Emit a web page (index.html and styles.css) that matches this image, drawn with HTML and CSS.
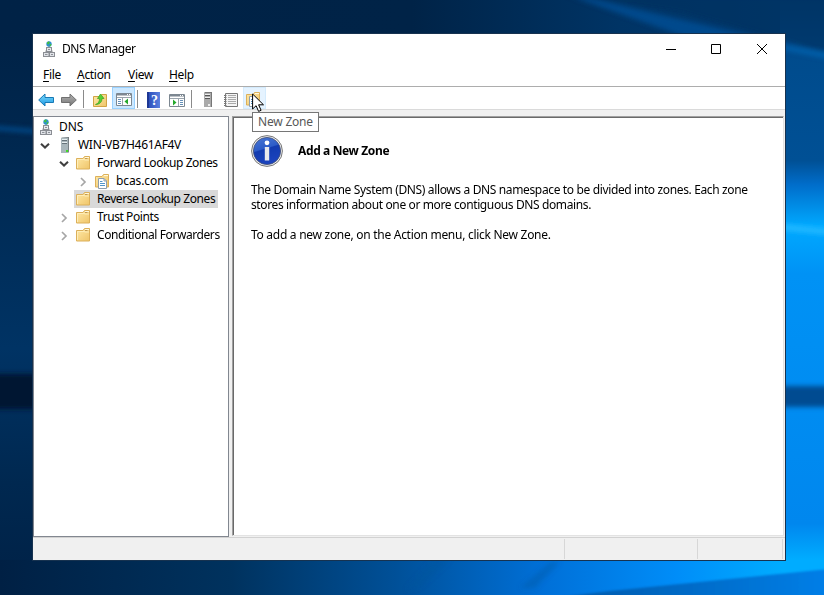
FILE: index.html
```html
<!DOCTYPE html>
<html lang="en">
<head>
<meta charset="utf-8">
<title>DNS Manager</title>
<link rel="stylesheet" href="styles.css">
</head>
<body>
<svg class="defs" width="0" height="0" aria-hidden="true">
  <defs>
    <linearGradient id="gold" x1="0" y1="0" x2="1" y2="1"><stop offset="0" stop-color="#ffe9a8"/><stop offset="1" stop-color="#efc56a"/></linearGradient>
    <linearGradient id="steel" x1="0" x2="1"><stop offset="0" stop-color="#c9ced0"/><stop offset="1" stop-color="#737b80"/></linearGradient>
    <linearGradient id="sky" x1="0" y1="0" x2="0" y2="1"><stop offset="0" stop-color="#7fdcfc"/><stop offset="1" stop-color="#1a96e2"/></linearGradient>
    <linearGradient id="grey" x1="0" y1="0" x2="0" y2="1"><stop offset="0" stop-color="#b4b4b4"/><stop offset="1" stop-color="#747474"/></linearGradient>
    <linearGradient id="book" x1="0" x2="1"><stop offset="0" stop-color="#2447b4"/><stop offset="1" stop-color="#5b80e0"/></linearGradient>
    <symbol id="dns" viewBox="0 0 16 16">
      <path d="M8 5v4M5 12V9.500h6V12" fill="none" stroke="#8a8d92"/>
      <circle cx="8" cy="3" r="2.700" fill="#2f8fd0"/><path d="M6 1.400 8 .3l.8 1.500L7.600 3.600 6.200 3zM9 3.300l1.500-.4-.6 2-1.400.6z" fill="#43c23f"/>
      <rect x="5.500" y="6.500" width="5" height="4" fill="#e6e8ec" stroke="#8b8e94"/>
      <rect x="2.500" y="11.500" width="5.500" height="4" fill="#e1e3e8" stroke="#8b8e94"/><rect x="8.500" y="11.500" width="5" height="4" fill="#e1e3e8" stroke="#8b8e94"/>
      <path d="M7 8.500h2M4 13.500h2.500M10 13.500h2" stroke="#8d9299"/>
    </symbol>
    <symbol id="server" viewBox="0 0 16 16">
      <path d="M4 1 5 0h7v15l-1 1H4z" fill="url(#steel)"/><path d="M4 1h7v15H4z" fill="#a9b6bb"/>
      <path d="M5 2.500h5M5 5.500h5" stroke="#e8eef0"/><path d="M5 3.500h5M5 6.500h5" stroke="#66737a"/><path d="M9 13h2v2H9z" fill="#42db27"/>
    </symbol>
    <symbol id="folder" viewBox="0 0 16 16">
      <path d="M.5 3.500H7l1.500-2h5v12.500H.5z" fill="url(#gold)" stroke="#dcb05a"/><path d="M9 2.500h4" stroke="#fff8de"/><path d="M9 3.500h2.500" stroke="#c29b52"/><path d="M1.500 13V4.500h6.500l1 .5h4" fill="none" stroke="#fff3c4" stroke-width=".8"/>
    </symbol>
    <symbol id="zone" viewBox="0 0 16 16">
      <path d="M.5 3.500H7l1.500-2h5v12.500H.5z" fill="url(#gold)" stroke="#dcb05a"/><path d="M9 2.500h4" stroke="#fff8de"/>
      <path d="M3.500 5.500H9L11.500 8v7.500h-8z" fill="#fff" stroke="#8d9eae"/><path d="M9 5.500V8h2.500" fill="none" stroke="#8d9eae"/><path d="M5 8.500h2.500M5 10.500h5M5 12.500h5" stroke="#5195c9"/>
    </symbol>
    <symbol id="open" viewBox="0 0 16 16"><path d="M4 6.700 8 10.500l4-3.800" fill="none" stroke="#404040" stroke-width="2"/></symbol>
    <symbol id="closed" viewBox="0 0 16 16"><path d="m6 5 4 4-4 4" fill="none" stroke="#a6a6a6" stroke-width="1.700"/></symbol>
  </defs>
</svg>

<svg class="wallpaper" viewBox="0 0 824 595" preserveAspectRatio="none" aria-hidden="true">
  <defs>
    <linearGradient id="top" x1="0" x2="1"><stop offset="0" stop-color="#002246"/><stop offset=".5" stop-color="#002347"/><stop offset=".75" stop-color="#003465"/><stop offset="1" stop-color="#003b72"/></linearGradient>
    <linearGradient id="left" x1="0" y1="0" x2="0" y2="1"><stop offset="0" stop-color="#002246"/><stop offset=".21" stop-color="#002850"/><stop offset=".56" stop-color="#003364"/><stop offset=".8" stop-color="#002850"/><stop offset="1" stop-color="#002146"/></linearGradient>
    <linearGradient id="right" x1="0" y1="0" x2="0" y2="1"><stop offset="0" stop-color="#003b72"/><stop offset=".08" stop-color="#004b8c"/><stop offset=".27" stop-color="#005095"/><stop offset=".31" stop-color="#006dca"/><stop offset=".38" stop-color="#00a9ff"/><stop offset=".46" stop-color="#0092f5"/><stop offset=".88" stop-color="#0087ee"/><stop offset=".94" stop-color="#00acff"/><stop offset="1" stop-color="#00acff"/></linearGradient>
    <linearGradient id="bottom" x1="0" x2="1"><stop offset="0" stop-color="#002044"/><stop offset=".28" stop-color="#00325e"/><stop offset=".48" stop-color="#005098"/><stop offset=".66" stop-color="#0070d8"/><stop offset=".82" stop-color="#008df8"/><stop offset=".95" stop-color="#00acff"/></linearGradient>
    <linearGradient id="floor" x1="0" x2="1"><stop offset="0" stop-color="#0058a8"/><stop offset="1" stop-color="#007fe8"/></linearGradient>
    <filter id="soft" x="-20%" y="-50%" width="140%" height="200%"><feGaussianBlur stdDeviation="2.500"/></filter>
    <filter id="edge" x="-5%" y="-20%" width="110%" height="140%"><feGaussianBlur stdDeviation="1"/></filter>
  </defs>
  <path d="M0 0h824v60H0z" fill="url(#top)"/>
  <path d="M0 34h40v561H0z" fill="url(#left)"/>
  <path d="M780 0h44v595h-44z" fill="url(#right)"/>
  <path d="M0 560h824v35H0z" fill="url(#bottom)"/>
  <g filter="url(#soft)">
    <path d="M565-5 680 12l150 42V-5z" fill="#00335f" opacity=".65"/>
    <path d="m573-3 17 1 170 40h-72z" fill="#00519b" opacity=".7"/>
    <path d="m-5 126 50 4v4l-50-4z" fill="#004b8d"/>
    <path d="m780 45 50 8v6l-50-10z" fill="#0060ac"/>
    <path d="m780 224 50 5v6l-50-5z" fill="#20b8ff"/>
    <path d="M-8 374h50v35H-8z" fill="#001530"/>
    <path d="M775 386h60v21h-60z" fill="#004b91"/>
    <path d="m430 562 20-2-30 27-14 3zM550 562h10l-25 26h-15z" fill="#00529c" opacity=".35"/>
  </g>
  <path d="m555 598 55-7 220-22v36H555z" fill="url(#floor)" filter="url(#edge)"/>
</svg>

<main class="window">
  <header class="titlebar">
    <svg class="icon"><use href="#dns"/></svg>
    <h1 class="title">DNS Manager</h1>
    <div class="controls">
      <svg viewBox="0 0 46 28"><path d="M15 14.500h10" stroke="#000"/></svg>
      <svg viewBox="0 0 46 28"><path d="M14.500 9.500h9v9h-9z" fill="none" stroke="#000"/></svg>
      <svg viewBox="0 0 46 28"><path d="m14 9 10 10M24 9 14 19" stroke="#000"/></svg>
    </div>
  </header>
  <nav class="menubar"><span class="file"><u>F</u>ile</span><span class="action"><u>A</u>ction</span><span class="view"><u>V</u>iew</span><span class="help"><u>H</u>elp</span></nav>
  <div class="toolbar">
    <span class="tool"><svg class="icon" viewBox="0 0 16 16"><path d="M.700 8 7 2v3.500h8.500v5H7V14z" fill="url(#sky)" stroke="#1779b5"/></svg></span>
    <span class="tool"><svg class="icon" viewBox="0 0 16 16"><path d="M15.300 8 9 2v3.500H.5v5H9V14z" fill="url(#grey)" stroke="#707070"/></svg></span>
    <i class="sep"></i>
    <span class="tool"><svg class="icon" viewBox="0 0 16 16"><path d="M1.500 4.500H8l1.500-2h5v12h-13z" fill="url(#gold)" stroke="#d1a344"/><path d="M3.500 12.500c3-1 4-3 4-6H5.500L8.500 2l3.500 4.500h-2c0 4-3 6-6.500 6z" fill="#57ce34" stroke="#36a31f" stroke-width=".7"/></svg></span>
    <span class="tool pressed"><svg class="icon" viewBox="0 0 16 16"><path d="M.5 2.500h15v12H.5z" fill="#fff" stroke="#7c8791"/><path d="M1 3.500h14" stroke="#7c8791" stroke-width="2"/><path d="M11 3.500h1M13 3.500h1" stroke="#fff"/><path d="M1 6.500h14M6.500 6v8" stroke="#9aa4ad"/><path d="M2 8.500h3M2 10.500h3M2 12.500h3" stroke="#6590b8"/><path d="M12 7.500v6L8.500 10.500z" fill="#25a82c"/></svg></span>
    <i class="sep"></i>
    <span class="tool"><svg class="icon" viewBox="0 0 16 16"><path d="M1 0h13v16H1z" fill="url(#book)"/><path d="M1 0h2v16H1z" fill="#1d3794"/><text x="8.500" y="13" text-anchor="middle" class="mark">?</text></svg></span>
    <span class="tool"><svg class="icon" viewBox="0 0 16 16"><path d="M.5 2.500h15v12H.5z" fill="#fff" stroke="#7c8791"/><path d="M1 3.500h14" stroke="#7c8791" stroke-width="2"/><path d="M11 3.500h1M13 3.500h1" stroke="#fff"/><path d="M1 6.500h14M9.500 6v8" stroke="#9aa4ad"/><path d="M11 8.500h3M11 10.500h3M11 12.500h3" stroke="#6590b8"/><path d="M4 7.500v6l3.500-3z" fill="#25a82c"/></svg></span>
    <i class="sep"></i>
    <span class="tool"><svg class="icon" viewBox="0 0 16 16"><path d="M4 1 5 0h7v15H4z" fill="#777"/><path d="M4 1h7v14H4z" fill="#aaa"/><path d="M5 2.500h5M5 5.500h5" stroke="#eee"/><path d="M5 3.500h5M5 6.500h5" stroke="#555"/><path d="M8 12h2v2H8z" fill="#eee"/></svg></span>
    <span class="tool"><svg class="icon" viewBox="0 0 16 16"><path d="M2.500 1.500h12v13h-12z" fill="#f5f5f5" stroke="#777"/><path d="M5 3.500h8M5 5.500h8M5 7.500h8M5 9.500h8M5 11.500h8" stroke="#aaa"/><path d="M1 3.500h2.500M1 5.500h2.500M1 7.500h2.500M1 9.500h2.500M1 11.500h2.500M1 13.500h2.500" stroke="#777"/></svg></span>
    <span class="tool hover"><svg class="icon"><use href="#zone"/></svg></span>
  </div>

  <div class="panes">
    <ul class="tree">
      <li class="row"><span class="pic"><svg class="icon"><use href="#dns"/></svg></span><span class="label dns">DNS</span></li>
      <li class="row"><svg class="arrow"><use href="#open"/></svg><span class="pic"><svg class="icon"><use href="#server"/></svg></span><span class="label host">WIN-VB7H461AF4V</span></li>
      <li class="row l1"><svg class="arrow"><use href="#open"/></svg><span class="pic"><svg class="icon"><use href="#folder"/></svg></span><span class="label">Forward Lookup Zones</span></li>
      <li class="row l2"><svg class="arrow"><use href="#closed"/></svg><span class="pic"><svg class="icon"><use href="#zone"/></svg></span><span class="label domain">bcas.com</span></li>
      <li class="row l1 selected"><span class="arrow"></span><span class="pic"><svg class="icon"><use href="#folder"/></svg></span><span class="label">Reverse Lookup Zones</span></li>
      <li class="row l1"><svg class="arrow"><use href="#closed"/></svg><span class="pic"><svg class="icon"><use href="#folder"/></svg></span><span class="label">Trust Points</span></li>
      <li class="row l1"><svg class="arrow"><use href="#closed"/></svg><span class="pic"><svg class="icon"><use href="#folder"/></svg></span><span class="label">Conditional Forwarders</span></li>
    </ul>
    <section class="details">
      <div class="heading">
        <svg class="info" viewBox="0 0 32 32"><defs><linearGradient id="blue" x1="0" y1="0" x2=".3" y2="1"><stop offset="0" stop-color="#4b78d4"/><stop offset=".48" stop-color="#2c5cc8"/><stop offset=".52" stop-color="#123bb0"/><stop offset="1" stop-color="#1b43bd"/></linearGradient></defs><circle cx="16" cy="16" r="15.400" fill="#eee" stroke="#777"/><circle cx="16" cy="16" r="13.600" fill="url(#blue)" stroke="#3e4b74" stroke-width=".8"/><circle cx="16" cy="7.800" r="2.400" fill="#fff"/><path d="M13.800 12h4.400v13.500h-4.400z" fill="#e9e9ec"/></svg>
        <h2>Add a New Zone</h2>
      </div>
      <p class="first">The Domain Name System (DNS) allows a DNS namespace to be divided into zones. Each zone</p>
      <p class="second">stores information about one or more contiguous DNS domains.</p>
      <p class="third">To add a new zone, on the Action menu, click New Zone.</p>
    </section>
  </div>
  <footer class="status"><span></span><span></span><span></span></footer>
</main>
<div class="tooltip">New Zone</div>
<svg class="cursor" viewBox="0 0 13 20"><path d="M.6 1v15l3.500-3.300 2.500 5.700 2.500-1.100-2.500-5.500h4.900z" fill="#fff" stroke="#000"/></svg>
</body>
</html>
```
FILE: styles.css
```css
* { box-sizing: border-box; }
body { margin: 0; width: 824px; height: 595px; overflow: hidden; background: #002347; padding: 33px 0 0 32px; font: 12px/18px "Noto Sans", "Open Sans", sans-serif; color: #000; }
h1, h2, p, ul { margin: 0; padding: 0; font-size: 12px; font-weight: 400; }
svg { display: block; flex: none; }
.defs { position: absolute; }
.wallpaper { position: absolute; inset: 0; width: 824px; height: 595px; z-index: -1; }
.icon { width: 16px; height: 16px; }
.window { width: 754px; height: 528px; border: 1px solid #17324f; background: #f0f0f0; display: flex; flex-direction: column; }
.titlebar { height: 29px; background: #fff; display: flex; align-items: center; padding-left: 8px; }
.title { margin-left: 5px; letter-spacing: -.45px; }
.controls { margin-left: auto; margin-right: -4px; display: flex; }
.controls svg { width: 46px; height: 28px; }
.menubar { height: 24px; background: #fff; border-bottom: 1px solid #adadad; display: flex; padding: 3px 0 0 10px; letter-spacing: -.3px; line-height: 18px; }
.menubar u { text-underline-offset: 2px; }
.file { width: 34px; }
.action { width: 51px; }
.view { width: 41px; }
.toolbar { height: 23px; background: #fff; border-bottom: 1px solid #dadada; display: flex; padding-left: 2px; }
.tool { width: 23px; height: 22px; display: flex; align-items: center; justify-content: flex-start; padding: 3px 0 0 3px; }
.pressed { background: #cce8ff; border: 1px solid #99d1ff; padding: 1px 0 0 3px; }
.hover { background: #e5f3ff; border: 1px solid #d4ebfd; padding: 1px 0 0 2px; }
.sep { width: 8px; height: 18px; margin-top: 3px; background: linear-gradient(#8a8a8a, #8a8a8a) 2px 0 / 1px 18px no-repeat; }
.mark { font: bold 14px "Liberation Serif", serif; fill: #fff; }
.panes { height: 421px; margin-top: 6px; display: flex; gap: 3px; }
.tree { width: 196px; border: 1px solid #828790; background: #fff; list-style: none; padding: 1px 0 0 2px; }
.row { height: 18px; display: flex; align-items: center; white-space: nowrap; }
.l1 { padding-left: 19px; }
.l2 { padding-left: 38px; }
.arrow { width: 16px; height: 16px; margin: 0 2px 0 1px; flex: none; }
.pic { width: 21px; height: 18px; padding: 1px 2px; flex: none; }
.label { line-height: 18px; height: 18px; padding: 0 3px 0 2px; letter-spacing: -.42px; flex: none; }
.host { letter-spacing: -.3px; }
.dns, .domain { letter-spacing: -.1px; }
.selected .pic, .selected .label { background: #d9d9d9; }
.details { width: 552px; height: 420px; background: #fff; border: 1px solid #a0a0a0; border-right-color: #e3e3e3; border-bottom-color: #e3e3e3; box-shadow: inset 1px 1px #696969; padding: 18px 0 0 18px; }
.heading { display: flex; align-items: center; }
.heading h2 { font-weight: 700; margin-left: 15px; letter-spacing: -.37px; }
.info { width: 32px; height: 32px; }
.details p { line-height: 15px; white-space: nowrap; }
.details .first { margin-top: 15px; letter-spacing: -.36px; }
.details .second { letter-spacing: -.38px; }
.details .third { margin-top: 15px; letter-spacing: -.28px; }
.status { height: 23px; margin-top: auto; border-top: 1px solid #d2d2d2; display: grid; grid-template-columns: 532px 133px 85px; padding: 1px 0; }
.status span { border-right: 1px solid #d7d7d7; }
.tooltip { position: absolute; left: 252px; top: 112px; width: 67px; height: 20px; border: 1px solid #767676; background: #fff; color: #575757; padding-left: 5px; line-height: 18px; letter-spacing: -.2px; white-space: nowrap; }
.cursor { position: absolute; left: 252px; top: 93px; width: 13px; height: 20px; }
```
